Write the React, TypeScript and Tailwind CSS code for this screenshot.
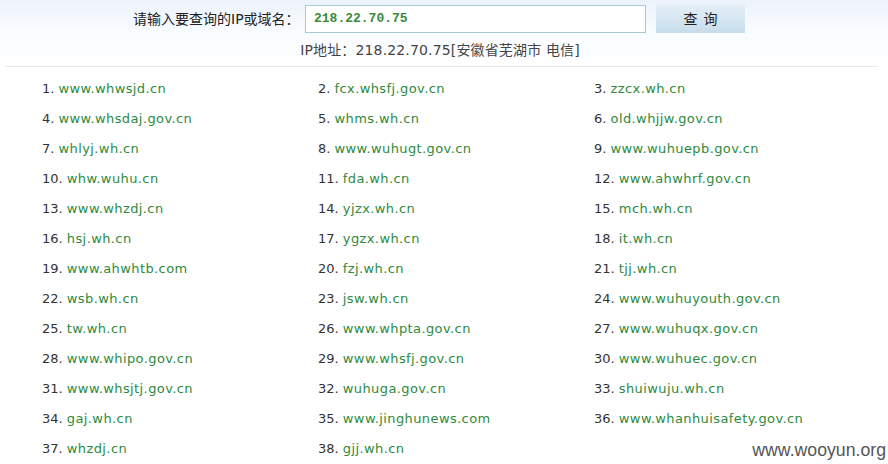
import React from "react";

const items = [
  "www.whwsjd.cn","fcx.whsfj.gov.cn","zzcx.wh.cn",
  "www.whsdaj.gov.cn","whms.wh.cn","old.whjjw.gov.cn",
  "whlyj.wh.cn","www.wuhugt.gov.cn","www.wuhuepb.gov.cn",
  "whw.wuhu.cn","fda.wh.cn","www.ahwhrf.gov.cn",
  "www.whzdj.cn","yjzx.wh.cn","mch.wh.cn",
  "hsj.wh.cn","ygzx.wh.cn","it.wh.cn",
  "www.ahwhtb.com","fzj.wh.cn","tjj.wh.cn",
  "wsb.wh.cn","jsw.wh.cn","www.wuhuyouth.gov.cn",
  "tw.wh.cn","www.whpta.gov.cn","www.wuhuqx.gov.cn",
  "www.whipo.gov.cn","www.whsfj.gov.cn","www.wuhuec.gov.cn",
  "www.whsjtj.gov.cn","wuhuga.gov.cn","shuiwuju.wh.cn",
  "gaj.wh.cn","www.jinghunews.com","www.whanhuisafety.gov.cn",
  "whzdj.cn","gjj.wh.cn",
];

export default function App() {
  return (
    <div className="relative w-[888px] h-[464px] overflow-hidden bg-white text-[13px] text-[#333] font-['DejaVu_Sans','Noto_Sans_CJK_SC',sans-serif]">
      <div className="h-[66px] bg-gradient-to-b from-[#edf3fb] via-[#f9fcff] to-white">
        <div className="flex items-center h-[38px] pt-[5px] pb-[5px]">
          <div className="pl-[133px] w-[305px] text-[14px] text-[#222]">请输入要查询的IP或域名：</div>
          <div className="w-[341px] h-[28px] border border-[#a9c9d6] bg-white flex items-center pl-[8px] font-['Liberation_Mono',monospace] font-bold text-[13px] text-[#3b8a3b]">
            218.22.70.75
          </div>
          <div className="ml-[10px] w-[89px] h-[28px] bg-gradient-to-b from-[#e4eff7] to-[#c7ddec] flex items-center justify-center text-[14px] text-[#222] tracking-[6px] pl-[6px]">
            查询
          </div>
        </div>
        <div className="text-center h-[24px] leading-[24px] pr-[8px] text-[14px] tracking-[0.15px] text-[#444]">
          IP地址：218.22.70.75[安徽省芜湖市 电信]
        </div>
      </div>
      <div className="mx-[5px] mr-[10px] border-t border-[#e4ebf0]"></div>
      <div className="grid grid-cols-[276px_276px_276px] pl-[42px] pt-[7px]">
        {items.map((d, i) => (
          <div key={i} className="h-[30px] leading-[30px] whitespace-nowrap">
            <span className="text-[#333]">{i + 1}. </span>
            <span className="text-[#2e8a3d] tracking-[0.4px]">{d}</span>
          </div>
        ))}
      </div>
      <div className="absolute right-[2px] bottom-[0px] text-[17.7px] text-[#555] font-['Liberation_Sans',sans-serif]">
        www.wooyun.org
      </div>
    </div>
  );
}
